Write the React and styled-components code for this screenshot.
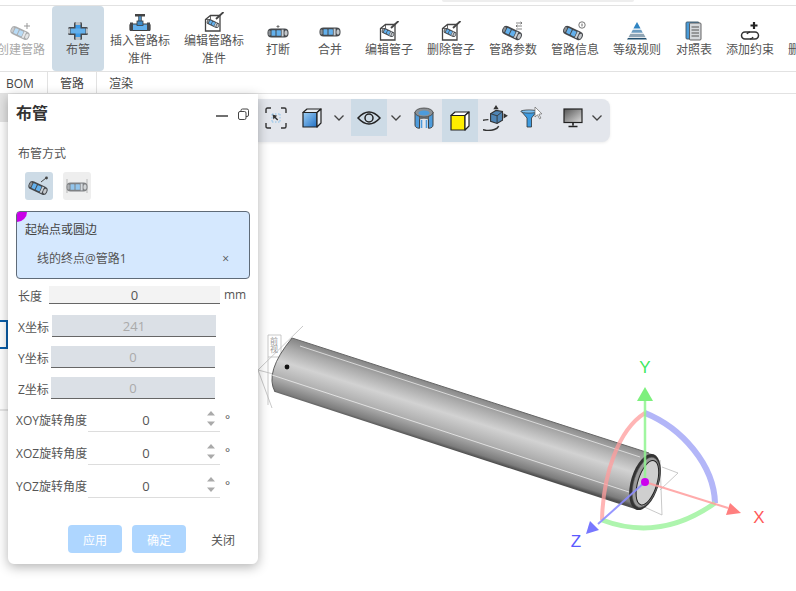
import React from "react";
import styled, { createGlobalStyle } from "styled-components";

const Global = createGlobalStyle`
  html, body { margin: 0; padding: 0; background: #fff; overflow: hidden; }
  body { font-family: "Open Sans", "Noto Sans CJK SC", sans-serif; font-size: 12px; color: #555; }
  * { box-sizing: border-box; }
`;

const Page = styled.div`
  width: 796px; height: 591px; display: flex; flex-direction: column; overflow: hidden; background: #fff;
`;
const TopStrip = styled.div`
  height: 6px; flex: none; border-bottom: 1px solid #e2e2e2; display: flex; padding-left: 442px;
`;
const StripTab = styled.div`
  width: ${p => p.$w}px; height: 2px; background: #eee; border-radius: 0 0 4px 4px;
`;
const Ribbon = styled.div`
  height: 66px; flex: none; display: flex; margin-left: -5px; border-bottom: 1px solid #e2e2e2;
`;
const RibbonItem = styled.div`
  flex: none; width: ${p => p.$w || 52}px; margin-left: ${p => p.$ml || 0}px; padding-top: 3px;
  display: flex; flex-direction: column; align-items: center; justify-content: center;
  border-radius: 4px; background: ${p => (p.$active ? "#cddbe6" : "transparent")};
  color: ${p => (p.$off ? "#aaa" : "#555")}; line-height: 18px; text-align: center; white-space: nowrap;
  svg { display: block; flex: none; }
`;
const TabBar = styled.div`
  height: 22px; flex: none; display: flex; border-bottom: 1px solid #e2e2e2;
`;
const Tab = styled.div`
  width: ${p => p.$w}px; padding: 1px 0 0 ${p => p.$pl}px; line-height: 21px; color: #444; flex: none;
  border-right: ${p => (p.$sep ? "1px solid #e2e2e2" : "none")};
`;
const Main = styled.div`
  flex: 1; display: flex; position: relative; min-height: 0;
`;
const LeftPane = styled.div`
  width: 8px; flex: none; display: flex; flex-direction: column;
`;
const PaneHead = styled.div`
  height: 28px; background: #e4e4e4;
`;
const PaneSelected = styled.div`
  height: 29px; margin-top: 198px; border: 2px solid #0b5ea8; border-left: 0; width: 8px;
`;
const PaneLine = styled.div`
  height: 2px; margin-top: 60px; background: #e6e6e6;
`;
const Canvas = styled.div`
  flex: 1; position: relative;
`;
const SceneSvg = styled.svg`
  position: absolute; left: -8px; top: 0; display: block;
`;
const Toolbar = styled.div`
  position: absolute; left: 250px; top: 5px; width: 352px; height: 43px; background: #e3e6ec;
  border-radius: 0 8px 8px 0; display: flex; align-items: flex-start;
  box-shadow: 0 1px 3px rgba(0,0,0,.08);
`;
const ToolBtn = styled.div`
  flex: none; width: ${p => p.$w || 36}px; height: ${p => p.$h || 37}px; margin-left: ${p => p.$ml || 0}px;
  display: flex; align-items: center; justify-content: center;
  background: ${p => (p.$active ? "#cddbe6" : "transparent")};
  svg { display: block; }
`;
const Panel = styled.div`
  position: absolute; left: 8px; top: 0; width: 250px; height: 470px; background: #fff;
  border-radius: 0 0 6px 6px; box-shadow: 0 3px 12px rgba(0,0,0,.3); display: flex; flex-direction: column;
  z-index: 2;
`;
const PanelHeader = styled.div`
  height: 40px; flex: none; padding: 0 9px 0 8px; display: flex; align-items: center; justify-content: space-between;
`;
const PanelTitle = styled.div`
  font-size: 16px; font-weight: 700; color: #333; line-height: 38px; height: 40px;
`;
const WinControls = styled.div`
  display: flex; align-items: center; gap: 10px;
  svg { display: block; }
`;
const SectionLabel = styled.div`
  margin: 11px 0 0 10px; line-height: 18px; color: #555; height: 17px;
`;
const ModeRow = styled.div`
  margin: 10px 0 0 17px; display: flex; gap: 10px;
`;
const ModeBtn = styled.div`
  width: 28px; height: 28px; border-radius: 3px; background: ${p => (p.$active ? "#cddbe6" : "#eee")};
  display: flex; align-items: center; justify-content: center;
  svg { display: block; }
`;
const SelectBox = styled.div`
  position: relative; margin: 11px 8px 0; height: 68px; background: #d5e8fe; border: 1px solid #5f6b78;
  border-radius: 4px; padding: 9px 8px 0; flex: none; color: #444;
`;
const Corner = styled.div`
  position: absolute; left: 0; top: 0; width: 10px; height: 10px; background: #c800e8; border-radius: 2px 0 10px 0;
`;
const SelectTitle = styled.div`
  line-height: 18px;
`;
const SelectValue = styled.div`
  margin: 11px 0 0 12px; line-height: 18px; display: flex; justify-content: space-between; padding-right: 12px; color: #555;
`;
const FieldRow = styled.div`
  flex: none; display: flex; align-items: center; height: ${p => p.$h}px; margin-top: ${p => p.$mt}px; padding-left: ${p => p.$pl || 10}px;
`;
const FieldLabel = styled.div`
  flex: none; width: ${p => p.$w}px; white-space: nowrap; color: #555;
  padding: ${p => (p.$up ? "0 0 2px" : "2px 0 0")};
`;
const ValueBox = styled.div`
  position: relative; flex: none; width: ${p => p.$w}px; height: 100%; text-align: center;
  display: flex; align-items: center; justify-content: center;
  background: ${p => (p.$kind === "disabled" ? "#dbe0e6" : p.$kind === "plain" ? "#fff" : "#f3f3f3")};
  color: ${p => (p.$kind === "disabled" ? "#aaa" : "#555")};
  border-bottom: 1px solid ${p => (p.$kind === "plain" ? "#ddd" : "#666")};
  font-size: 13px;
`;
const AngleValue = styled.span`
  margin: 0 16px 2px 0;
`;
const Spinner = styled.svg`
  position: absolute; right: 3px; top: 0; display: block;
`;
const Unit = styled.div`
  margin-left: 4px; color: #555; line-height: 14px; align-self: ${p => (p.$raised ? "flex-start" : "center")};
  margin-top: ${p => (p.$raised ? 3 : 0)}px;
  padding-left: ${p => (p.$raised ? 1 : 0)}px;
`;
const Footer = styled.div`
  margin-top: auto; padding: 0 0 10px 60px; display: flex; gap: 10px;
`;
const PrimaryBtn = styled.div`
  width: 54px; height: 28px; border-radius: 4px; background: #aed6ff; color: #fff; display: flex; align-items: center; justify-content: center;
  padding-top: 2px;
`;
const CloseBtn = styled.div`
  width: 54px; height: 28px; color: #555; display: flex; align-items: center; justify-content: center; margin-top: 1px;
`;

const Pipe = ({ x = 12, y = 10, a = 25, s = 1, o = 1 }) => (
  <g transform={`translate(${x} ${y}) rotate(${a}) scale(${s})`} opacity={o}>
    <rect x="-10.5" y="-4.5" width="21" height="9" rx="4" fill="#45484c" />
    <rect x="-6.5" y="-2.8" width="4" height="5.6" rx=".6" fill="#63b0ec" />
    <rect x="-1.5" y="-2.8" width="4.4" height="5.6" rx=".6" fill="#63b0ec" />
    <rect x="3.6" y="-3.4" width="2" height="6.8" fill="#c9d0d6" />
    <ellipse cx="8" cy="0" rx="1.6" ry="2.8" fill="#c4c8cc" />
    <rect x="-9.6" y="-2.6" width="2.2" height="5.2" rx="1" fill="#8d9297" />
  </g>
);
const Svg24 = ({ children }) => <svg width="24" height="20" viewBox="0 0 24 20">{children}</svg>;

const CreateIcon = () => (
  <Svg24><Pipe x={11} y={12} s={0.95} o={0.45} /><path d="M18 2v6M15 5h6" stroke="#999" strokeWidth="1" fill="none" /></Svg24>
);
const RouteIcon = () => (
  <Svg24>
    <rect x="8" y="1" width="8" height="18" rx="1.5" fill="#45484c" />
    <rect x="2" y="6" width="20" height="8" rx="1.5" fill="#45484c" />
    <rect x="9.5" y="1" width="5" height="3" fill="#b9c0c6" />
    <rect x="9.5" y="16" width="5" height="3" fill="#b9c0c6" />
    <rect x="9.5" y="4" width="5" height="12" fill="#3d9be8" />
    <rect x="4.5" y="7.5" width="15" height="5" fill="#63b0ec" />
    <rect x="2" y="7.5" width="2" height="5" fill="#b9c0c6" />
    <rect x="20" y="7.5" width="2" height="5" fill="#b9c0c6" />
  </Svg24>
);
const InsertIcon = () => (
  <Svg24>
    <rect x="7" y="2" width="10" height="2.5" fill="#444" />
    <rect x="10.5" y="4" width="3" height="6" fill="#4d8fc4" stroke="#444" strokeWidth=".6" />
    <rect x="2" y="12" width="20" height="6.5" rx="1" fill="#63b0ec" stroke="#3d3d3d" strokeWidth="1.2" />
    <rect x="9" y="9" width="6" height="4.5" fill="#3d8ccb" stroke="#3d3d3d" strokeWidth=".8" />
    <rect x="2" y="10.5" width="3" height="8.5" fill="#45484c" />
    <rect x="19" y="10.5" width="3" height="8.5" fill="#45484c" />
  </Svg24>
);
const EditIcon = () => (
  <Svg24>
    <path d="M3.5 7.5 8.5 3.5h9.5v15.5H3.5z" fill="#fff" stroke="#444" strokeWidth="1.3" />
    <path d="M3.5 7.5h5v-4" fill="none" stroke="#444" strokeWidth=".8" />
    <Pipe x={11} y={11.5} s={0.62} />
    <path d="M14 7 21.5 0" stroke="#444" strokeWidth="1.8" fill="none" />
  </Svg24>
);
const BreakIcon = () => (
  <Svg24>
    <path d="M12 4v3M10.5 5.5h3" stroke="#666" strokeWidth=".9" />
    <Pipe y={12} a={0} s={1} />
  </Svg24>
);
const MergeIcon = () => <Svg24><Pipe y={11} a={0} s={1} /></Svg24>;
const ParamIcon = () => (
  <Svg24>
    <Pipe x={11} y={12} s={0.98} />
    <path d="M15 2h6M15 5h6M19.5 .8 21 2 19.5 3.2M16.5 3.8 15 5 16.5 6.2M15 8h6" stroke="#555" strokeWidth=".7" fill="none" />
  </Svg24>
);
const InfoIcon = () => (
  <Svg24>
    <Pipe x={10} y={12} s={0.98} />
    <circle cx="19" cy="4" r="3.2" fill="#fff" stroke="#555" strokeWidth=".8" />
    <path d="M19 2.6v2.8" stroke="#555" strokeWidth=".9" />
  </Svg24>
);
const GradeIcon = () => (
  <Svg24>
    <path d="M12 1 22 18.5H2z" fill="#fff" />
    <path d="M12 1 8.4 7.5h7.2z" fill="#2f84c2" />
    <path d="M7.8 8.7h8.4l1.6 3H6.2z" fill="#6d9cc0" />
    <path d="M5.4 12.8h13.2l2 3.4H3.4z" fill="#8fa4b4" />
    <path d="M2 18.5h20l-1-1.6H3z" fill="#23506f" />
  </Svg24>
);
const TableIcon = () => (
  <Svg24>
    <rect x="4" y="1" width="13" height="17" rx="1" fill="#4a9bd8" stroke="#3d5566" strokeWidth=".9" />
    <rect x="7.5" y="2" width="11.5" height="17" rx="1" fill="#d5d8dc" stroke="#555" strokeWidth=".9" />
    <path d="M9.5 6h7.5M9.5 9h7.5M9.5 12h7.5M9.5 15h7.5" stroke="#555" strokeWidth="1" />
  </Svg24>
);
const ConstraintIcon = () => (
  <Svg24>
    <path d="M16 1v7M12.5 4.5h7" stroke="#222" strokeWidth="2.2" />
    <path d="M12 11H7a3.5 3.5 0 0 0 0 7h5a3.5 3.5 0 0 0 3-2" fill="none" stroke="#333" strokeWidth="1.5" />
    <path d="M12 18h5a3.5 3.5 0 0 0 0-7h-5a3.5 3.5 0 0 0-3 2" fill="none" stroke="#333" strokeWidth="1.5" />
  </Svg24>
);

const ribbon = [
  { label: "创建管路", w: 52, Icon: CreateIcon, off: true },
  { label: "布管", w: 52, ml: 5, Icon: RouteIcon, active: true },
  { label: <>插入管路标<br />准件</>, w: 72, Icon: InsertIcon },
  { label: <>编辑管路标<br />准件</>, w: 72, ml: 2, Icon: EditIcon },
  { label: "打断", w: 52, ml: 2, Icon: BreakIcon },
  { label: "合并", w: 52, Icon: MergeIcon },
  { label: "编辑管子", w: 52, ml: 7, Icon: EditIcon },
  { label: "删除管子", w: 52, ml: 10, Icon: EditIcon },
  { label: "管路参数", w: 52, ml: 10, Icon: ParamIcon },
  { label: "管路信息", w: 52, ml: 10, Icon: InfoIcon },
  { label: "等级规则", w: 52, ml: 10, Icon: GradeIcon },
  { label: "对照表", w: 44, ml: 9, Icon: TableIcon },
  { label: "添加约束", w: 52, ml: 8, Icon: ConstraintIcon },
  { label: "删除约束", w: 52, ml: 10, Icon: ConstraintIcon },
];

const Chevron = () => (
  <svg width="12" height="8" viewBox="0 0 12 8"><path d="M1.5 1.5 6 6l4.5-4.5" fill="none" stroke="#444" strokeWidth="1.3" /></svg>
);

const Cube = ({ front, side, top }) => (
  <svg width="24" height="24" viewBox="0 0 24 24">
    <defs>
      <linearGradient id="cubeBlue" x1="0" y1="0" x2="1" y2="1"><stop offset="0" stopColor="#9fd0f5" /><stop offset="1" stopColor="#1f6fc4" /></linearGradient>
    </defs>
    <path d="M3 6.5h14V21H3z" fill={front} stroke="#222" strokeWidth="1.2" strokeLinejoin="round" />
    <path d="M3 6.5 7 3h14l-4 3.5z" fill={top} stroke="#222" strokeWidth="1.2" strokeLinejoin="round" />
    <path d="M17 6.5 21 3v14l-4 4z" fill={side} stroke="#222" strokeWidth="1.2" strokeLinejoin="round" />
  </svg>
);

const SelectIcon = () => (
  <svg width="22" height="22" viewBox="0 0 22 22">
    <path d="M1 6V2.5Q1 1 2.5 1H6M16 1h3.5Q21 1 21 2.5V6M21 16v3.5q0 1.5-1.5 1.5H16M6 21H2.5Q1 21 1 19.5V16" fill="none" stroke="#333" strokeWidth="1.4" />
    <path d="M7 7h8M7 15h8M7 7v8M15 7v8" stroke="#8cc1ea" strokeWidth="1" strokeDasharray="1.5 1.5" />
    <path d="M7.5 7.5l1 5 1.2-1.5 2.5 2.5 1-1-2.5-2.5 1.5-1.2z" fill="#333" />
  </svg>
);
const EyeIcon = () => (
  <svg width="24" height="16" viewBox="0 0 24 16">
    <path d="M1 8Q12-4 23 8 12 20 1 8z" fill="none" stroke="#222" strokeWidth="1.5" />
    <circle cx="12" cy="8" r="4" fill="none" stroke="#222" strokeWidth="1.5" />
  </svg>
);
const RingIcon = () => (
  <svg width="20" height="22" viewBox="0 0 20 22">
    <path d="M1 5v13q0 3 4.5 3.3V9Q2 8 1 5zM19 5v13q0 3-4.5 3.3V9q3.5-1 4.5-4z" fill="#4d9bdc" stroke="#444" strokeWidth="1" />
    <path d="M5.5 9q4.500 1.500 9 0v3.500q-4.500-1.500-9 0z" fill="#6b7075" />
    <path d="M7.5 13v8M12.5 13v8" stroke="#4d9bdc" strokeWidth="1.6" />
    <ellipse cx="10" cy="5.5" rx="9" ry="4.5" fill="#8b9095" stroke="#444" strokeWidth=".8" />
    <ellipse cx="10" cy="6" rx="5.5" ry="2.6" fill="#4d9bdc" />
  </svg>
);
const OrbitIcon = () => (
  <svg width="26" height="26" viewBox="0 0 24 24">
    <path d="M5 13.5a10 5 0 1 0 9.5 6" fill="none" stroke="#333" strokeWidth="1.3" />
    <path d="M7 8 12 5l6 1v8l-5 3-6-2z" fill="#4f85b5" stroke="#333" strokeWidth="1" />
    <path d="M7 8l6 2v7M13 10l5-4" fill="none" stroke="#333" strokeWidth=".8" />
    <path d="M12 0l2.5 4h-5zM23 10l-4 2.5v-5z" fill="#333" />
  </svg>
);
const FilterIcon = () => (
  <svg width="24" height="24" viewBox="0 0 24 24">
    <path d="M1 5h16l-5.5 7v9h-4.500v-9z" fill="#3d9be0" stroke="#333" strokeWidth=".8" />
    <ellipse cx="9" cy="5.5" rx="8" ry="1.6" fill="#7cc0f0" stroke="#333" strokeWidth=".7" />
    <path d="M15 1v10l2.5-2.2 2 4 1.4-.7-2-3.9 3-.4z" fill="#fff" stroke="#666" strokeWidth=".7" />
  </svg>
);
const MonitorIcon = () => (
  <svg width="20" height="20" viewBox="0 0 20 20">
    <defs>
      <linearGradient id="screen" x1="0" y1="0" x2="1" y2="1"><stop offset="0" stopColor="#555" /><stop offset="1" stopColor="#ddd" /></linearGradient>
    </defs>
    <rect x="1" y="1" width="18" height="13.5" fill="url(#screen)" stroke="#222" strokeWidth="1.2" />
    <path d="M10 14.5v3M5.5 18.5h9" stroke="#222" strokeWidth="1.6" />
  </svg>
);
const ModeMoveIcon = () => (
  <svg width="26" height="26" viewBox="0 0 26 26">
    <Pipe x={12} y={15} s={0.95} a={25} />
    <path d="M15 9 20 5" stroke="#444" strokeWidth="1" />
    <circle cx="20.5" cy="5" r="1.4" fill="#444" />
  </svg>
);
const ModeLineIcon = () => (
  <svg width="26" height="26" viewBox="0 0 26 26" opacity=".65">
    <path d="M3 6v14M23 6v14" stroke="#999" strokeWidth="1" />
    <Pipe x={13} y={14} a={0} s={1} />
  </svg>
);

const Spin = () => (
  <Spinner width="12" height="21" viewBox="0 0 12 21">
    <path d="M6 1 10 5.5H2zM6 16 2 11.5h8z" fill="#aaa" />
  </Spinner>
);

const angleRows = [
  { label: "XOY旋转角度", mt: 11 },
  { label: "XOZ旋转角度", mt: 11 },
  { label: "YOZ旋转角度", mt: 11 },
];
const coordRows = [
  { label: "X坐标", w: 34, vw: 164, value: "241", mt: 11 },
  { label: "Y坐标", w: 33, vw: 164, value: "0", mt: 9 },
  { label: "Z坐标", w: 33, vw: 164, value: "0", mt: 9 },
];

const Scene = () => (
  <SceneSvg width="796" height="497" viewBox="0 94 796 497">
    <defs>
      <linearGradient id="pipeShade" gradientUnits="userSpaceOnUse" x1="477" y1="398" x2="460" y2="452">
        <stop offset="0" stopColor="#8a8a8a" />
        <stop offset=".15" stopColor="#a8a8a8" />
        <stop offset=".42" stopColor="#d2d2d2" />
        <stop offset=".72" stopColor="#aeaeae" />
        <stop offset=".94" stopColor="#7c7c7c" />
        <stop offset="1" stopColor="#505050" />
      </linearGradient>
    </defs>
    <g fill="none" stroke="#bbb" strokeWidth=".8">
      <path d="M303 326 258 370 272 408" />
      <path d="M268 335V405M268 335h13v22h-13" />
      <path d="M258 370 296 380" />
      <path d="M660 460 662 515 640 505" />
      <path d="M662 467 678 473 660 490" />
    </g>
    <text x="274" y="337" fontSize="8" fill="#999" fontFamily="Noto Sans CJK SC, sans-serif" style={{ writingMode: "vertical-rl" }}>前视</text>

    <path d="M292 338 L655 455 L638 510 L275 392 Q264 372 292 338 Z" fill="url(#pipeShade)" />
    <path d="M292 338Q264 372 275 392" fill="none" stroke="#444" strokeWidth=".8" />
    <path d="M292 338 649 453" stroke="#666" strokeWidth="1" fill="none" />
    <path d="M300 346 640 457" stroke="#e8e8e8" strokeWidth=".8" fill="none" />
    <path d="M272 375 632 493" stroke="#eee" strokeWidth=".8" fill="none" />
    <circle cx="287" cy="367" r="2.4" fill="#111" />

    <g transform="rotate(17 645 482)">
      <ellipse cx="645" cy="482" rx="14" ry="29" fill="#333" />
      <ellipse cx="646" cy="482" rx="12" ry="26" fill="#999" stroke="#555" strokeWidth=".6" />
      <ellipse cx="647.5" cy="482" rx="9.5" ry="23" fill="#cfcfcf" stroke="#222" strokeWidth="1" />
    </g>

    <g fill="none" strokeLinecap="butt">
      <path d="M645 413C682 428 714 465 715 503" stroke="#b3b6f8" strokeWidth="6" />
      <path d="M645 413C618 430 603 475 602 520" stroke="#ff9c9c" strokeOpacity=".75" strokeWidth="4" />
      <path d="M602 520Q660 542 715 503" stroke="#aef5ae" strokeWidth="5" />
      <path d="M645 482V400" stroke="#8ff58f" strokeOpacity=".85" strokeWidth="2.5" />
      <path d="M645 482 728 508" stroke="#ff9c9c" strokeOpacity=".85" strokeWidth="2" />
      <path d="M645 482 598 524" stroke="#8c8cff" strokeOpacity=".9" strokeWidth="2" />
    </g>
    <path d="M645 387 653 401H637Z" fill="#7df07d" />
    <path d="M741 513 726 515 730 503Z" fill="#ff7f7f" />
    <path d="M586 534 590 521 599 530Z" fill="#7777ff" />
    <circle cx="645" cy="482" r="4" fill="#cc00ee" />
    <text x="645" y="373" textAnchor="middle" fontSize="17" fill="#3fe85f" fontFamily="Liberation Sans, sans-serif">Y</text>
    <text x="759" y="523" textAnchor="middle" fontSize="17" fill="#ff5a5a" fontFamily="Liberation Sans, sans-serif">X</text>
    <text x="576" y="547" textAnchor="middle" fontSize="17" fill="#5a5aff" fontFamily="Liberation Sans, sans-serif">Z</text>
  </SceneSvg>
);

export default function App() {
  return (
    <Page>
      <Global />
      <TopStrip><StripTab $w={192} /></TopStrip>
      <Ribbon>
        {ribbon.map(({ label, w, ml, Icon, active, off }, i) => (
          <RibbonItem key={i} $w={w} $ml={ml} $active={active} $off={off}>
            <Icon />
            <div>{label}</div>
          </RibbonItem>
        ))}
      </Ribbon>
      <TabBar>
        <Tab $w={48} $pl={6} $sep>BOM</Tab>
        <Tab $w={49} $pl={12} $sep>管路</Tab>
        <Tab $w={60} $pl={12}>渲染</Tab>
      </TabBar>
      <Main>
        <LeftPane>
          <PaneHead />
          <PaneSelected />
          <PaneLine />
        </LeftPane>
        <Canvas>
          <Scene />
          <Toolbar>
            <ToolBtn><SelectIcon /></ToolBtn>
            <ToolBtn><Cube front="url(#cubeBlue)" side="#e8edf2" top="#e8edf2" /></ToolBtn>
            <ToolBtn $w={18}><Chevron /></ToolBtn>
            <ToolBtn $active $ml={3}><EyeIcon /></ToolBtn>
            <ToolBtn $w={18}><Chevron /></ToolBtn>
            <ToolBtn $ml={1}><RingIcon /></ToolBtn>
            <ToolBtn $active $h={43}><Cube front="#ffee00" side="#fff" top="#fff" /></ToolBtn>
            <ToolBtn><OrbitIcon /></ToolBtn>
            <ToolBtn><FilterIcon /></ToolBtn>
            <ToolBtn $ml={5}><MonitorIcon /></ToolBtn>
            <ToolBtn $w={12}><Chevron /></ToolBtn>
          </Toolbar>
        </Canvas>
        <Panel>
          <PanelHeader>
            <PanelTitle>布管</PanelTitle>
            <WinControls>
              <svg width="12" height="12" viewBox="0 0 12 12"><path d="M0 8h12" stroke="#333" strokeWidth="1.4" /></svg>
              <svg width="11" height="12" viewBox="0 0 11 12">
                <rect x="3" y="1" width="7.5" height="7.5" rx="1.5" fill="none" stroke="#444" strokeWidth="1" />
                <rect x=".5" y="3.5" width="7.5" height="8" rx="1.5" fill="#fff" stroke="#444" strokeWidth="1" />
              </svg>
            </WinControls>
          </PanelHeader>
          <SectionLabel>布管方式</SectionLabel>
          <ModeRow>
            <ModeBtn $active><ModeMoveIcon /></ModeBtn>
            <ModeBtn><ModeLineIcon /></ModeBtn>
          </ModeRow>
          <SelectBox>
            <Corner />
            <SelectTitle>起始点或圆边</SelectTitle>
            <SelectValue><span>线的终点@管路1</span><span>×</span></SelectValue>
          </SelectBox>
          <FieldRow $h={18} $mt={7}>
            <FieldLabel $w={31}>长度</FieldLabel>
            <ValueBox $w={171}>0</ValueBox>
            <Unit>mm</Unit>
          </FieldRow>
          {coordRows.map(r => (
            <FieldRow key={r.label} $h={22} $mt={r.mt}>
              <FieldLabel $w={r.w}>{r.label}</FieldLabel>
              <ValueBox $w={r.vw} $kind="disabled">{r.value}</ValueBox>
            </FieldRow>
          ))}
          {angleRows.map(r => (
            <FieldRow key={r.label} $h={22} $mt={r.mt} $pl={8}>
              <FieldLabel $w={72} $up>{r.label}</FieldLabel>
              <ValueBox $w={132} $kind="plain">
                <AngleValue>0</AngleValue>
                <Spin />
              </ValueBox>
              <Unit $raised>°</Unit>
            </FieldRow>
          ))}
          <Footer>
            <PrimaryBtn>应用</PrimaryBtn>
            <PrimaryBtn>确定</PrimaryBtn>
            <CloseBtn>关闭</CloseBtn>
          </Footer>
        </Panel>
      </Main>
    </Page>
  );
}
